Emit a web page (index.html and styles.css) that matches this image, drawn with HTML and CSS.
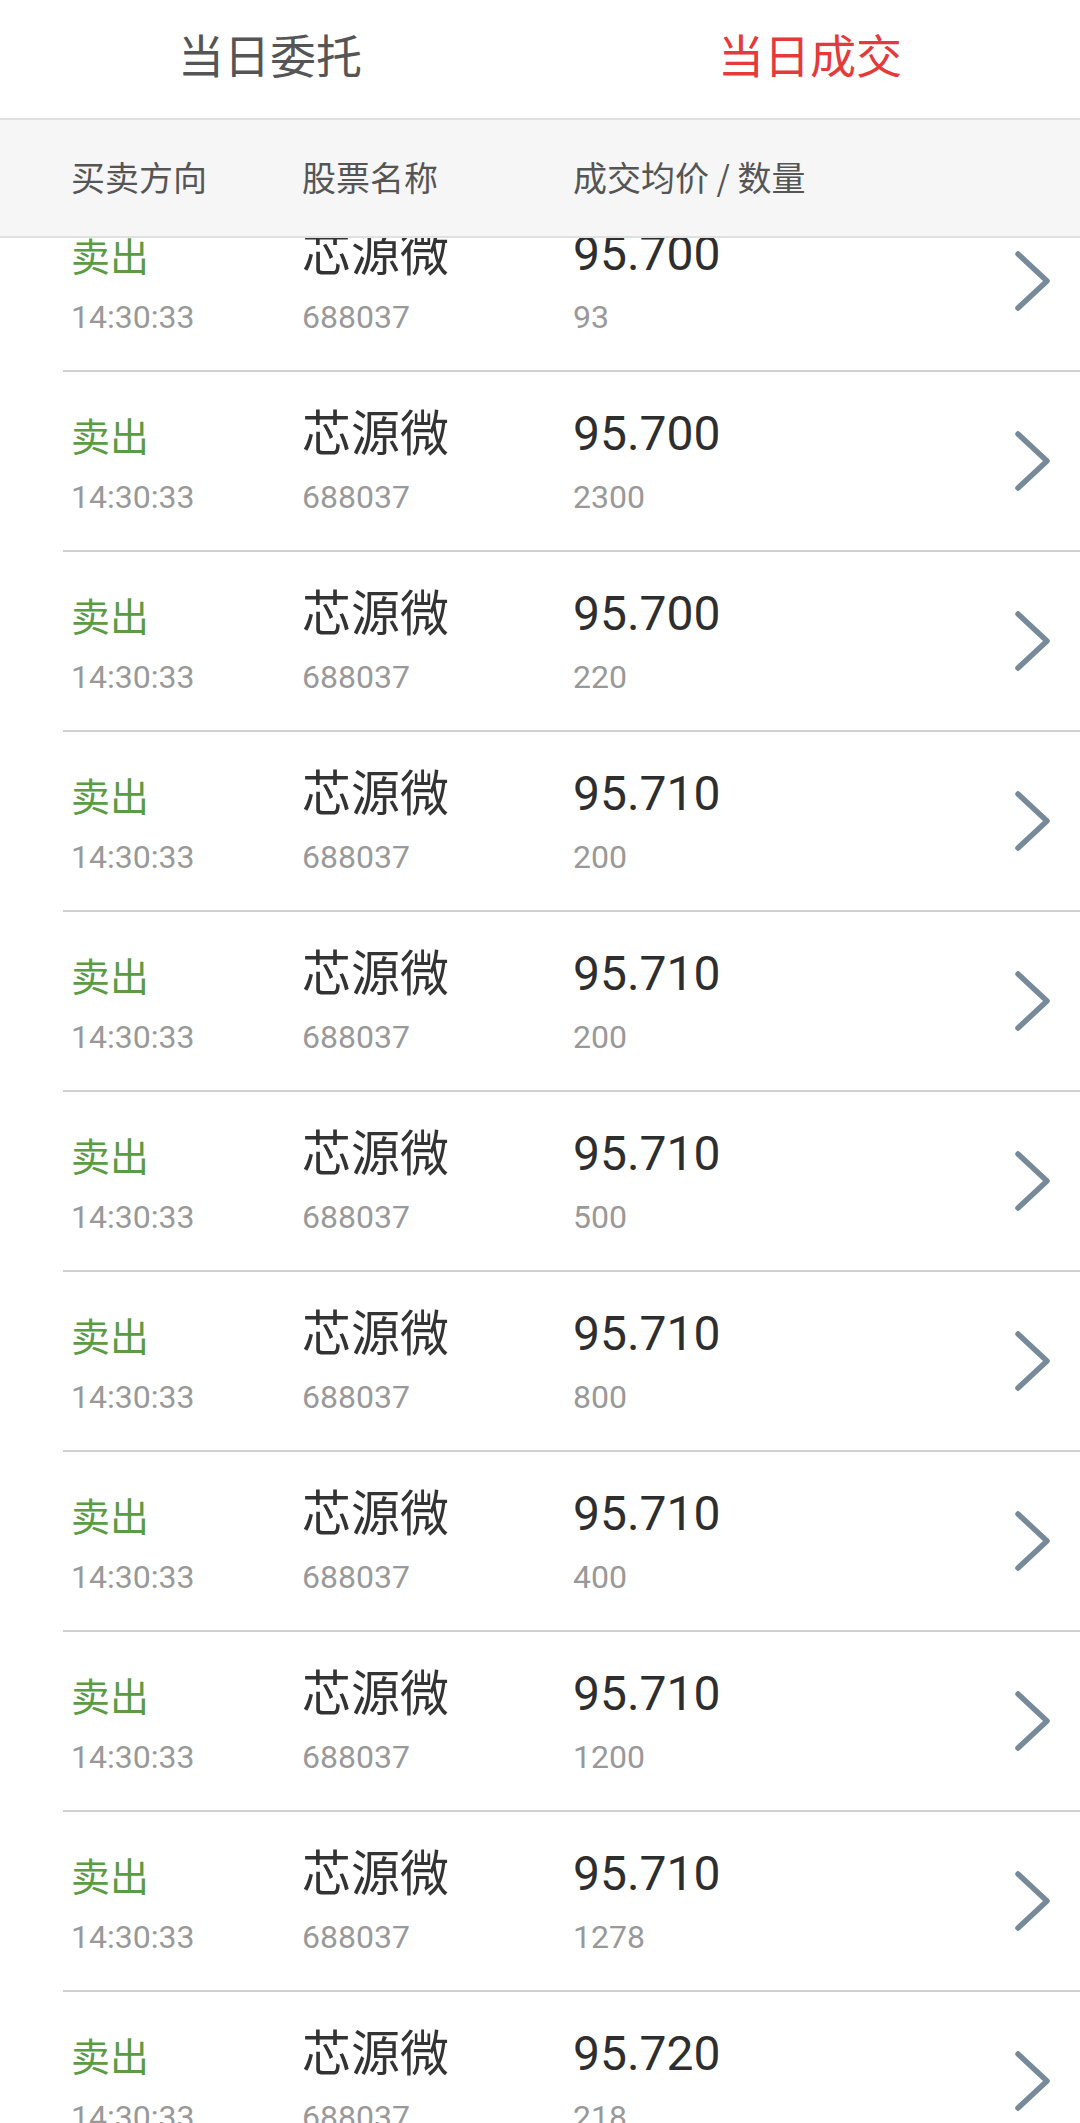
FILE: index.html
```html
<!DOCTYPE html>
<html lang="zh-CN">
<head>
<meta charset="utf-8">
<title>当日成交</title>
<link rel="stylesheet" href="styles.css">
</head>
<body>
<div class="page">
  <div class="tabs">
    <div class="tab">当日委托</div>
    <div class="tab active">当日成交</div>
  </div>
  <div class="thead">
    <span class="th">买卖方向</span>
    <span class="th">股票名称</span>
    <span class="th">成交均价 / 数量</span>
  </div>
  <div class="list">
    <div class="list-inner">
      <div class="row"><div class="cell"><span class="dir">卖出</span><span class="sub">14:30:33</span></div><div class="cell"><span class="name">芯源微</span><span class="sub">688037</span></div><div class="cell"><span class="price">95.700</span><span class="sub">93</span></div><div class="arrow"><svg viewBox="0 0 50 64" width="50" height="64"><path d="M8 5 L37 32 L8 59"/></svg></div></div>
      <div class="row"><div class="cell"><span class="dir">卖出</span><span class="sub">14:30:33</span></div><div class="cell"><span class="name">芯源微</span><span class="sub">688037</span></div><div class="cell"><span class="price">95.700</span><span class="sub">2300</span></div><div class="arrow"><svg viewBox="0 0 50 64" width="50" height="64"><path d="M8 5 L37 32 L8 59"/></svg></div></div>
      <div class="row"><div class="cell"><span class="dir">卖出</span><span class="sub">14:30:33</span></div><div class="cell"><span class="name">芯源微</span><span class="sub">688037</span></div><div class="cell"><span class="price">95.700</span><span class="sub">220</span></div><div class="arrow"><svg viewBox="0 0 50 64" width="50" height="64"><path d="M8 5 L37 32 L8 59"/></svg></div></div>
      <div class="row"><div class="cell"><span class="dir">卖出</span><span class="sub">14:30:33</span></div><div class="cell"><span class="name">芯源微</span><span class="sub">688037</span></div><div class="cell"><span class="price">95.710</span><span class="sub">200</span></div><div class="arrow"><svg viewBox="0 0 50 64" width="50" height="64"><path d="M8 5 L37 32 L8 59"/></svg></div></div>
      <div class="row"><div class="cell"><span class="dir">卖出</span><span class="sub">14:30:33</span></div><div class="cell"><span class="name">芯源微</span><span class="sub">688037</span></div><div class="cell"><span class="price">95.710</span><span class="sub">200</span></div><div class="arrow"><svg viewBox="0 0 50 64" width="50" height="64"><path d="M8 5 L37 32 L8 59"/></svg></div></div>
      <div class="row"><div class="cell"><span class="dir">卖出</span><span class="sub">14:30:33</span></div><div class="cell"><span class="name">芯源微</span><span class="sub">688037</span></div><div class="cell"><span class="price">95.710</span><span class="sub">500</span></div><div class="arrow"><svg viewBox="0 0 50 64" width="50" height="64"><path d="M8 5 L37 32 L8 59"/></svg></div></div>
      <div class="row"><div class="cell"><span class="dir">卖出</span><span class="sub">14:30:33</span></div><div class="cell"><span class="name">芯源微</span><span class="sub">688037</span></div><div class="cell"><span class="price">95.710</span><span class="sub">800</span></div><div class="arrow"><svg viewBox="0 0 50 64" width="50" height="64"><path d="M8 5 L37 32 L8 59"/></svg></div></div>
      <div class="row"><div class="cell"><span class="dir">卖出</span><span class="sub">14:30:33</span></div><div class="cell"><span class="name">芯源微</span><span class="sub">688037</span></div><div class="cell"><span class="price">95.710</span><span class="sub">400</span></div><div class="arrow"><svg viewBox="0 0 50 64" width="50" height="64"><path d="M8 5 L37 32 L8 59"/></svg></div></div>
      <div class="row"><div class="cell"><span class="dir">卖出</span><span class="sub">14:30:33</span></div><div class="cell"><span class="name">芯源微</span><span class="sub">688037</span></div><div class="cell"><span class="price">95.710</span><span class="sub">1200</span></div><div class="arrow"><svg viewBox="0 0 50 64" width="50" height="64"><path d="M8 5 L37 32 L8 59"/></svg></div></div>
      <div class="row"><div class="cell"><span class="dir">卖出</span><span class="sub">14:30:33</span></div><div class="cell"><span class="name">芯源微</span><span class="sub">688037</span></div><div class="cell"><span class="price">95.710</span><span class="sub">1278</span></div><div class="arrow"><svg viewBox="0 0 50 64" width="50" height="64"><path d="M8 5 L37 32 L8 59"/></svg></div></div>
      <div class="row"><div class="cell"><span class="dir">卖出</span><span class="sub">14:30:33</span></div><div class="cell"><span class="name">芯源微</span><span class="sub">688037</span></div><div class="cell"><span class="price">95.720</span><span class="sub">218</span></div><div class="arrow"><svg viewBox="0 0 50 64" width="50" height="64"><path d="M8 5 L37 32 L8 59"/></svg></div></div>
    </div>
  </div>
</div>
</body>
</html>
```

FILE: styles.css
```css
* { box-sizing: border-box; }
html, body { margin: 0; padding: 0; background: #ffffff; }
body {
  font-family: Roboto, "Noto Sans CJK SC", sans-serif;
  width: 1080px;
  height: 2123px;
  overflow: hidden;
}
.page { width: 1080px; }

.tabs {
  display: flex;
  height: 120px;
  border-bottom: 2px solid #e0e0e0;
  background: #ffffff;
}
.tab {
  flex: 1;
  display: flex;
  align-items: center;
  justify-content: center;
  padding-bottom: 12px;
  font-family: "Noto Sans CJK SC", sans-serif;
  font-size: 46px;
  color: #555555;
}
.tab.active { color: #e43a3a; }

.thead {
  display: grid;
  grid-template-columns: 231px 271px 1fr;
  align-items: center;
  height: 118px;
  padding-left: 71px;
  padding-bottom: 4px;
  background: #f6f6f6;
  border-bottom: 2px solid #e0e0e0;
  font-family: "Noto Sans CJK SC", sans-serif;
  font-size: 34px;
  color: #555555;
}

.list {
  height: 1885px;
  overflow: hidden;
}
.list-inner { margin-top: -46px; }

.row {
  display: grid;
  grid-template-columns: 231px 271px 1fr 70px;
  height: 180px;
  margin-left: 63px;
  padding-left: 8px;
  border-bottom: 2px solid #cfcfcf;
}
.cell {
  display: flex;
  flex-direction: column;
  padding-top: 32px;
}
.dir, .name, .price {
  height: 60px;
  line-height: 60px;
  white-space: nowrap;
}
.dir {
  font-family: "Noto Sans CJK SC", sans-serif;
  font-size: 39px;
  color: #5c9b45;
}
.name {
  font-family: "Noto Sans CJK SC", sans-serif;
  font-size: 49px;
  line-height: 52px;
  color: #333333;
}
.price {
  font-family: Roboto, sans-serif;
  font-size: 48px;
  color: #2e2e2e;
}
.sub {
  margin-top: 13px;
  height: 40px;
  line-height: 40px;
  font-family: Roboto, sans-serif;
  font-size: 32px;
  color: #999999;
}
.arrow {
  display: flex;
  align-items: center;
}
.arrow svg { display: block; }
.arrow path {
  fill: none;
  stroke: #768a99;
  stroke-width: 5.5;
  stroke-linecap: round;
  stroke-linejoin: round;
}
```
